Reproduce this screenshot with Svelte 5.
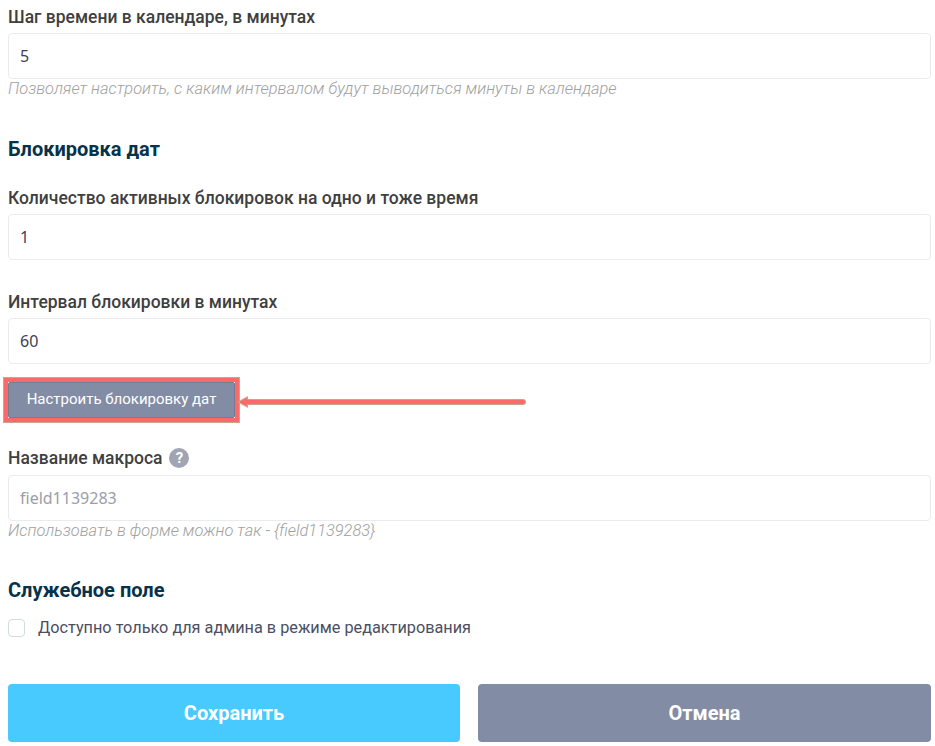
<script>
	const macro = 'field1139283';
</script>

<div class="form">
	<div class="field first">
		<label class="label" for="step">Шаг времени в календаре, в минутах</label>
		<input id="step" class="input" type="text" value="5" />
		<p class="hint">Позволяет настроить, с каким интервалом будут выводиться минуты в календаре</p>
	</div>

	<h3 class="heading lock">Блокировка дат</h3>

	<div class="field count">
		<label class="label" for="count">Количество активных блокировок на одно и тоже время</label>
		<input id="count" class="input" type="text" value="1" />
	</div>

	<div class="field interval">
		<label class="label" for="interval">Интервал блокировки в минутах</label>
		<input id="interval" class="input" type="text" value="60" />
	</div>

	<div class="setup">
		<button class="setup-btn" type="button">Настроить блокировку дат</button>
		<svg class="arrow" width="292" height="16" viewBox="0 0 292 16">
			<path d="M10 8H287" stroke="#c9a58f" stroke-width="6" stroke-linecap="round" />
			<path d="M1 8L12 2V14Z" fill="#c9a58f" />
			<path d="M10 8H287" stroke="#fb6a6a" stroke-width="4" stroke-linecap="round" />
			<path d="M3 8L11 3.8V12.2Z" fill="#fb6a6a" />
		</svg>
	</div>

	<div class="field macro">
		<label class="label macro-label" for="macro">
			Название макроса
			<span class="help">?</span>
		</label>
		<input id="macro" class="input" type="text" placeholder={macro} />
		<p class="hint">Использовать в форме можно так - {'{'}{macro}{'}'}</p>
	</div>

	<h3 class="heading service">Служебное поле</h3>

	<label class="check">
		<span class="box"></span>
		Доступно только для админа в режиме редактирования
	</label>

	<div class="actions">
		<button class="action save" type="button">Сохранить</button>
		<button class="action cancel" type="button">Отмена</button>
	</div>
</div>

<style>
	:global(body) {
		background: #fff;
		font-family: Roboto, sans-serif;
	}
	.form {
		display: flex;
		flex-direction: column;
		padding: 7px 4px 4px 8px;
		height: 735px;
		overflow: hidden;
	}
	.field {
		display: flex;
		flex-direction: column;
	}
	.label {
		display: flex;
		align-items: center;
		gap: 7px;
		height: 20px;
		line-height: 20px;
		margin-bottom: 6px;
		font-size: 17.5px;
		font-weight: 500;
		color: #3f3f3f;
	}
	.macro-label {
		margin-bottom: 7px;
	}
	.input {
		box-sizing: border-box;
		width: 100%;
		height: 46px;
		padding: 0 11px;
		border: 1px solid #e9ebef;
		border-radius: 4px;
		background: #fff;
		font-family: 'Noto Sans', sans-serif;
		font-size: 16px;
		color: #3d4157;
		outline: none;
	}
	.input::placeholder {
		color: #9a9ea8;
		opacity: 1;
	}
	.hint {
		margin: 1px 0 0;
		height: 18px;
		line-height: 18px;
		font-size: 16.4px;
		font-style: italic;
		font-weight: 300;
		color: #a0a0a0;
	}
	.heading {
		margin: 0;
		height: 22px;
		line-height: 22px;
		font-size: 20px;
		font-weight: 700;
		color: #06324a;
	}
	.lock {
		margin-top: 40px;
	}
	.count {
		margin-top: 28px;
	}
	.interval {
		margin-top: 32px;
	}
	.setup {
		position: relative;
		align-self: flex-start;
		margin-top: 13px;
		margin-left: -5px;
		border: 5px solid #fb6a6a;
		outline: 1px solid #c9a58f;
		outline-offset: -1px;
	}
	.setup-btn {
		display: block;
		width: 227px;
		height: 36px;
		padding: 0 0 3px;
		border: 1px solid #767c90;
		border-radius: 2px;
		background: #838ca5;
		font-family: Roboto, sans-serif;
		font-size: 15px;
		color: #fff;
	}
	.arrow {
		position: absolute;
		left: 228px;
		top: 12px;
	}
	.macro {
		margin-top: 25px;
	}
	.help {
		display: inline-flex;
		align-items: center;
		justify-content: center;
		width: 20px;
		height: 20px;
		border-radius: 50%;
		background: #a1a5b3;
		font-size: 15px;
		font-weight: 700;
		color: #fff;
	}
	.service {
		margin-top: 39px;
	}
	.check {
		display: flex;
		align-items: center;
		gap: 13px;
		margin-top: 17px;
		font-size: 16.25px;
		color: #4a4f63;
	}
	.box {
		box-sizing: border-box;
		width: 17px;
		height: 18px;
		border: 1px solid #d3dae2;
		border-radius: 4px;
		background: #fff;
	}
	.actions {
		display: grid;
		grid-template-columns: 452px 453px;
		gap: 18px;
		margin-top: 47px;
	}
	.action {
		height: 58px;
		border: none;
		border-radius: 4px;
		font-family: Roboto, sans-serif;
		font-size: 20px;
		font-weight: 700;
		color: #fff;
	}
	.save {
		background: #48caff;
	}
	.cancel {
		background: #838ca5;
	}
</style>
